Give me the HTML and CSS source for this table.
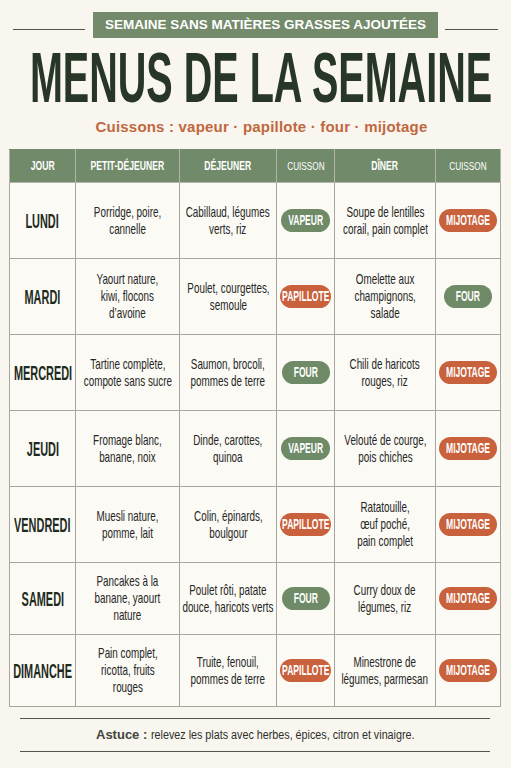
FILE: index.html
```html
<!DOCTYPE html>
<html lang="fr">
<head>
    <meta charset="UTF-8">
    <meta name="viewport" content="width=device-width, initial-scale=1.0">
    <title>Menus de la semaine</title>
    <link rel="stylesheet" href="styles.css">
</head>
<body>
    <div class="page">
        <div class="top">
            <span class="rule left"></span>
            <p class="banner">SEMAINE SANS MATIÈRES GRASSES AJOUTÉES</p>
            <span class="rule"></span>
        </div>

        <div class="title-wrap">
            <h1 class="title">MENUS DE LA SEMAINE</h1>
        </div>

        <p class="subtitle">Cuissons : vapeur · papillote · four · mijotage</p>

        <table class="menu">
            <colgroup>
                <col style="width:66px">
                <col style="width:104px">
                <col style="width:97px">
                <col style="width:58px">
                <col style="width:101px">
                <col style="width:65px">
            </colgroup>
            <thead>
                <tr>
                    <th><div class="c"><span>JOUR</span></div></th>
                    <th><div class="c"><span>PETIT-DÉJEUNER</span></div></th>
                    <th><div class="c"><span>DÉJEUNER</span></div></th>
                    <th class="small"><div class="c"><span>CUISSON</span></div></th>
                    <th><div class="c"><span>DÎNER</span></div></th>
                    <th class="small"><div class="c"><span>CUISSON</span></div></th>
                </tr>
            </thead>
            <tbody>
                <tr>
                    <td class="day"><div class="c"><span>LUNDI</span></div></td>
                    <td><div class="c"><span>Porridge, poire,<br>cannelle</span></div></td>
                    <td><div class="c"><span>Cabillaud, légumes<br>verts, riz</span></div></td>
                    <td><span class="pill green vapeur"><span>VAPEUR</span></span></td>
                    <td><div class="c"><span>Soupe de lentilles<br>corail, pain complet</span></div></td>
                    <td><span class="pill orange mijotage"><span>MIJOTAGE</span></span></td>
                </tr>
                <tr>
                    <td class="day"><div class="c"><span>MARDI</span></div></td>
                    <td><div class="c"><span>Yaourt nature,<br>kiwi, flocons<br>d’avoine</span></div></td>
                    <td><div class="c"><span>Poulet, courgettes,<br>semoule</span></div></td>
                    <td><span class="pill orange papillote"><span>PAPILLOTE</span></span></td>
                    <td><div class="c"><span>Omelette aux<br>champignons,<br>salade</span></div></td>
                    <td><span class="pill green four"><span>FOUR</span></span></td>
                </tr>
                <tr>
                    <td class="day"><div class="c"><span>MERCREDI</span></div></td>
                    <td><div class="c"><span>Tartine complète,<br>compote sans sucre</span></div></td>
                    <td><div class="c"><span>Saumon, brocoli,<br>pommes de terre</span></div></td>
                    <td><span class="pill green four"><span>FOUR</span></span></td>
                    <td><div class="c"><span>Chili de haricots<br>rouges, riz</span></div></td>
                    <td><span class="pill orange mijotage"><span>MIJOTAGE</span></span></td>
                </tr>
                <tr>
                    <td class="day"><div class="c"><span>JEUDI</span></div></td>
                    <td><div class="c"><span>Fromage blanc,<br>banane, noix</span></div></td>
                    <td><div class="c"><span>Dinde, carottes,<br>quinoa</span></div></td>
                    <td><span class="pill green vapeur"><span>VAPEUR</span></span></td>
                    <td><div class="c"><span>Velouté de courge,<br>pois chiches</span></div></td>
                    <td><span class="pill orange mijotage"><span>MIJOTAGE</span></span></td>
                </tr>
                <tr>
                    <td class="day"><div class="c"><span>VENDREDI</span></div></td>
                    <td><div class="c"><span>Muesli nature,<br>pomme, lait</span></div></td>
                    <td><div class="c"><span>Colin, épinards,<br>boulgour</span></div></td>
                    <td><span class="pill orange papillote"><span>PAPILLOTE</span></span></td>
                    <td><div class="c"><span>Ratatouille,<br>œuf poché,<br>pain complet</span></div></td>
                    <td><span class="pill orange mijotage"><span>MIJOTAGE</span></span></td>
                </tr>
                <tr class="short">
                    <td class="day"><div class="c"><span>SAMEDI</span></div></td>
                    <td><div class="c"><span>Pancakes à la<br>banane, yaourt<br>nature</span></div></td>
                    <td><div class="c"><span>Poulet rôti, patate<br>douce, haricots verts</span></div></td>
                    <td><span class="pill green four"><span>FOUR</span></span></td>
                    <td><div class="c"><span>Curry doux de<br>légumes, riz</span></div></td>
                    <td><span class="pill orange mijotage"><span>MIJOTAGE</span></span></td>
                </tr>
                <tr class="short">
                    <td class="day"><div class="c"><span>DIMANCHE</span></div></td>
                    <td><div class="c"><span>Pain complet,<br>ricotta, fruits<br>rouges</span></div></td>
                    <td><div class="c"><span>Truite, fenouil,<br>pommes de terre</span></div></td>
                    <td><span class="pill orange papillote"><span>PAPILLOTE</span></span></td>
                    <td><div class="c"><span>Minestrone de<br>légumes, parmesan</span></div></td>
                    <td><span class="pill orange mijotage"><span>MIJOTAGE</span></span></td>
                </tr>
            </tbody>
        </table>

        <div class="tip">
            <p><strong>Astuce :</strong> <span>relevez les plats avec herbes, épices, citron et vinaigre.</span></p>
        </div>
    </div>
</body>
</html>
```

FILE: styles.css
```css
* {
    box-sizing: border-box;
    margin: 0;
    padding: 0;
}
body {
    background-color: #f8f6ee;
    color: #262626;
    font-family: "Liberation Sans", Arial, sans-serif;
}
.page {
    width: 511px;
    padding-top: 12px;
}

/* haut de page */
.top {
    display: flex;
    align-items: center;
    gap: 7px;
    padding: 0 13px;
}
.rule {
    flex: 1;
    height: 1px;
    margin-top: 8px;
    background-color: #55554f;
}
.rule.left {
    flex: 0 0 72px;
    margin-right: 1px;
}
.banner {
    height: 26px;
    line-height: 26px;
    padding: 0 12px;
    background-color: #738b6b;
    color: #fff;
    font-size: 13.5px;
    font-weight: bold;
}
.title-wrap {
    display: flex;
    justify-content: center;
    height: 70px;
    margin: 5px 0 0 12px;
}
.title {
    display: inline-block;
    white-space: nowrap;
    font-size: 70px;
    line-height: 70px;
    font-weight: bold;
    color: #273626;
    transform: scaleX(.565);
}
.subtitle {
    margin: 5px 0 0 12px;
    text-align: center;
    font-size: 15px;
    line-height: 18px;
    font-weight: bold;
    letter-spacing: .2px;
    color: #c0673f;
}

/* tableau */
.menu {
    width: 491px;
    margin: 13px 0 0 9px;
    border-collapse: collapse;
    table-layout: fixed;
    background-color: #fbfaf5;
}
.c {
    display: flex;
    justify-content: center;
}
.c span {
    display: inline-block;
    white-space: nowrap;
}
.menu th {
    height: 33px;
    background-color: #718a69;
    color: #fff;
    font-size: 12px;
    font-weight: bold;
    border: 1px solid #b4b4ac;
    border-top-color: #718a69;
}
.menu th .c span {
    transform: scaleX(.72);
}
.menu th.small {
    font-size: 10.5px;
    font-weight: normal;
}
.menu th.small .c span {
    transform: scaleX(.78);
}
.menu td {
    height: 76px;
    border: 1px solid #a6a69f;
    text-align: center;
    vertical-align: middle;
    font-size: 14.5px;
    line-height: 17px;
    color: #262624;
}
.menu td .c span {
    transform: scaleX(.68);
}
.menu tr.short td {
    height: 72px;
}
.menu td.day {
    font-size: 21px;
    font-weight: bold;
    color: #1e2a1d;
}
.menu td.day .c span {
    transform: scaleX(.52);
}

/* pastilles de cuisson */
.pill {
    display: inline-flex;
    justify-content: center;
    vertical-align: middle;
    height: 23px;
    line-height: 23px;
    border-radius: 12px;
    color: #fff;
    font-size: 14px;
    font-weight: bold;
}
.pill span {
    display: inline-block;
    white-space: nowrap;
    transform: scaleX(.61);
}
.pill.green {
    background-color: #6e8a66;
}
.pill.orange {
    background-color: #c9613c;
}
.vapeur {
    width: 49px;
}
.four {
    width: 48px;
}
.papillote {
    width: 51px;
}
.mijotage {
    width: 58px;
}

/* astuce */
.tip {
    margin: 11px 21px 0 20px;
    padding: 7px 0 7px 76px;
    border-top: 1px solid #55554f;
    border-bottom: 1px solid #55554f;
    font-size: 12.5px;
    line-height: 17px;
    color: #2e2e2c;
}
.tip p {
    display: flex;
    align-items: baseline;
    white-space: nowrap;
}
.tip strong {
    margin-right: 4px;
    font-size: 13px;
    color: #444440;
}
.tip span {
    display: inline-block;
    transform: scaleX(.86);
    transform-origin: left center;
}
```
